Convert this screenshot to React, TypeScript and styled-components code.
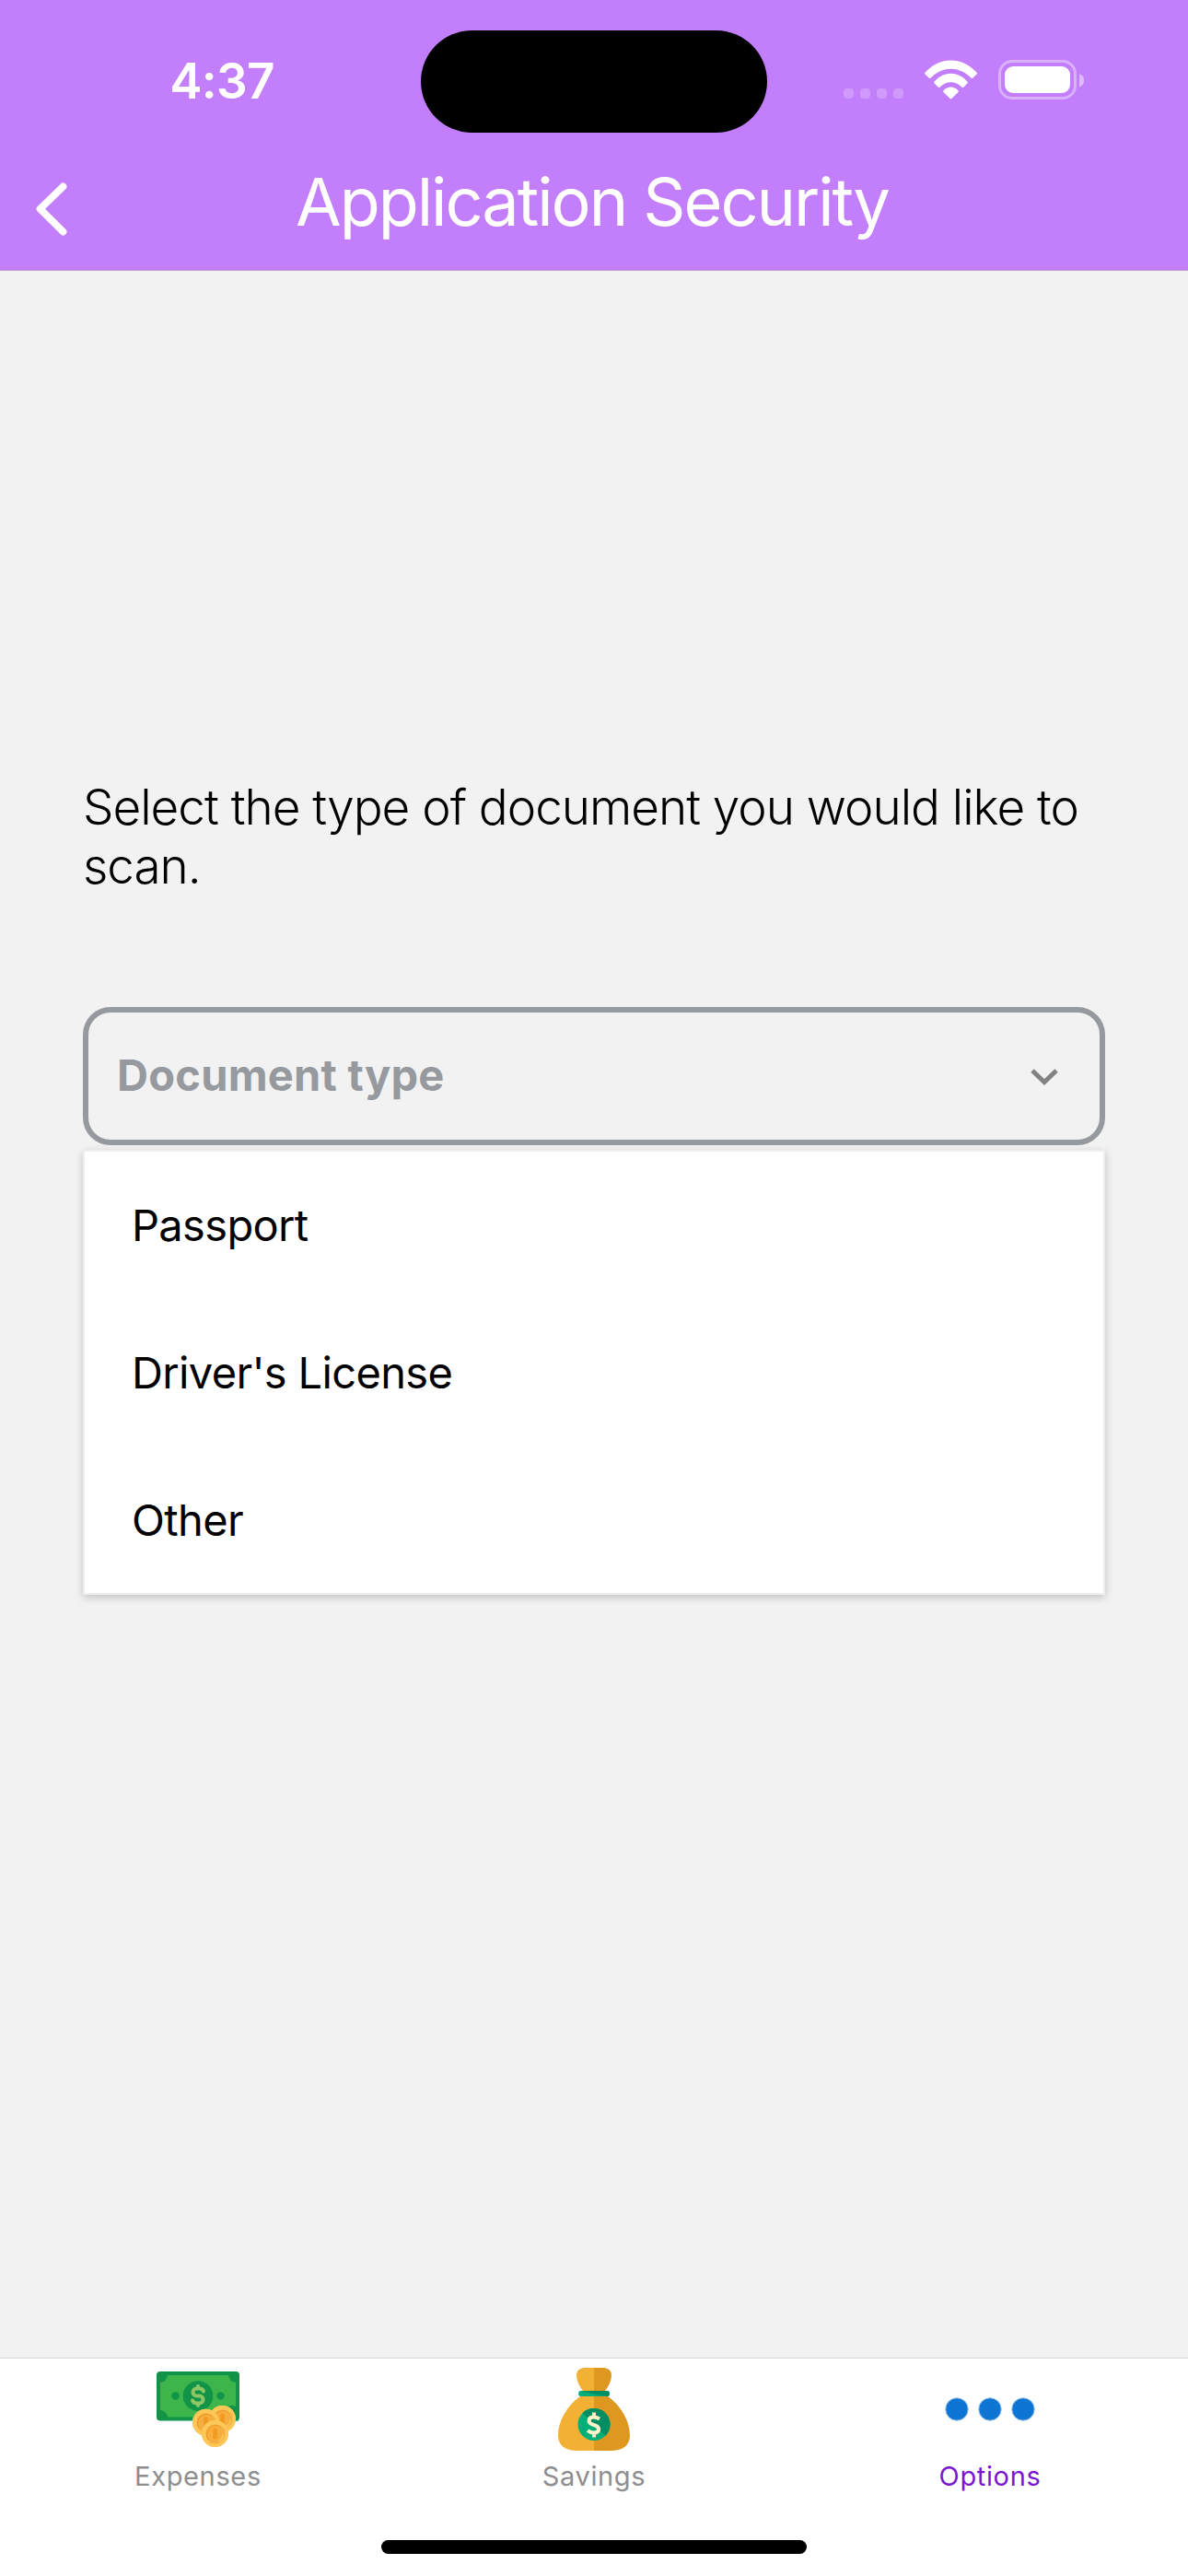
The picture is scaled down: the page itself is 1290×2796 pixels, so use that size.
import React from 'react';
import styled, { createGlobalStyle } from 'styled-components';

const GlobalStyle = createGlobalStyle`
  *, *::before, *::after { box-sizing: border-box; }
  html, body { margin: 0; padding: 0; }
  body { background: #f2f2f2; font-family: Inter, "Liberation Sans", sans-serif; }
  svg { display: block; flex: none; }
`;

const Screen = styled.div`
  width: 1290px;
  height: 2796px;
  display: flex;
  flex-direction: column;
  background: #f2f2f2;
  overflow: hidden;
`;

const Header = styled.header`
  height: 294px;
  flex: none;
  display: flex;
  flex-direction: column;
  background: #c27efb;
  border-bottom: 1px solid #b9a6c9;
  color: #fff;
`;

const StatusBar = styled.div`
  height: 177px;
  flex: none;
  display: grid;
  grid-template-columns: 457px 376px 457px;
  align-items: center;
`;

const Clock = styled.time`
  padding: 0 0 2px 25px;
  text-align: center;
  font-size: 53px;
  line-height: 64px;
  font-weight: 600;
  letter-spacing: -0.7px;
`;

const Island = styled.div`
  height: 111px;
  border-radius: 56px;
  background: #000;
`;

const StatusIcons = styled.div`
  padding-left: 83px;
  display: flex;
`;

const NavBar = styled.div`
  flex: 1;
  display: grid;
  grid-template-columns: 120px 1fr 120px;
  align-items: start;
`;

const BackButton = styled.button`
  margin: 0;
  padding: 16px 0 0 35px;
  border: 0;
  background: none;
  color: #fff;
`;

const Title = styled.h1`
  margin: 0;
  padding-right: 4px;
  text-align: center;
  font-size: 72px;
  line-height: 84px;
  font-weight: 400;
  letter-spacing: -2.05px;
  white-space: nowrap;
`;

const Content = styled.main`
  flex: 1;
  display: flex;
  flex-direction: column;
  padding: 550px 90px 0;
`;

const Prompt = styled.p`
  margin: 0 0 121px;
  font-size: 53px;
  line-height: 64px;
  font-weight: 300;
  letter-spacing: -1px;
  color: #000;
`;

const Select = styled.div`
  height: 150px;
  flex: none;
  display: flex;
  align-items: center;
  justify-content: space-between;
  padding: 0 44px 0 31px;
  border: 6px solid #96999e;
  border-radius: 30px;
`;

const Placeholder = styled.span`
  padding-bottom: 2px;
  font-size: 47px;
  line-height: 58px;
  font-weight: 700;
  letter-spacing: 0.25px;
  color: #96999e;
`;

const Menu = styled.ul`
  list-style: none;
  margin: 5px 0 0;
  padding: 0;
  border: 2px solid #eee;
  background: #fff;
  box-shadow: 0 3px 9px rgba(0, 0, 0, 0.2);
`;

const MenuItem = styled.li`
  height: 160px;
  display: flex;
  align-items: center;
  padding-left: 51px;
  font-size: 47px;
  line-height: 58px;
  letter-spacing: -0.65px;
  color: #000;

  &:last-child { height: 159px; }
`;

const TabBar = styled.nav`
  height: 237px;
  flex: none;
  display: flex;
  flex-direction: column;
  align-items: center;
  border-top: 1px solid #d8d8d8;
  background: #fff;
`;

const Tabs = styled.div`
  width: 100%;
  height: 197px;
  display: grid;
  grid-template-columns: repeat(3, 1fr);
  padding-top: 10px;
`;

const Tab = styled.a`
  display: flex;
  flex-direction: column;
  align-items: center;
  gap: 10px;
`;

const TabLabel = styled.span<{ $active?: boolean }>`
  font-size: 29px;
  line-height: 36px;
  letter-spacing: 0.65px;
  color: ${(p) => (p.$active ? '#7a16cf' : '#8e8e8f')};
`;

const HomeIndicator = styled.div`
  width: 462px;
  height: 15px;
  border-radius: 8px;
  background: #000;
`;

const StatusGlyphs = () => (
  <svg width="266" height="50" viewBox="0 0 266 50">
    <g fill="#fff" fillOpacity=".22">
      <rect x="0" y="32" width="11" height="11" rx="4" />
      <rect x="18" y="32" width="11" height="11" rx="4" />
      <rect x="36" y="32" width="11" height="11" rx="4" />
      <rect x="54" y="32" width="11" height="11" rx="4" />
    </g>
    <g fill="#fff">
      <path d="M88.700 14.600C104.500-2.800 128.300-2.800 144.300 14.600Q145.600 15.600 144.300 16.800L140.500 20.600Q139.500 21.600 138.400 20.500C125.700 7.400 107.300 7.400 94.700 20.500Q93.600 21.600 92.600 20.600L88.700 16.800Q87.400 15.600 88.700 14.600Z" />
      <path d="M98.700 24.400C109 13 124 13 134.300 24.400Q135.400 25.400 134.300 26.500L130.500 30.400Q129.500 31.400 128.400 30.400C121.200 23.400 111.800 23.400 104.600 30.400Q103.500 31.400 102.500 30.400L98.700 26.500Q97.600 25.400 98.700 24.400Z" />
      <path d="M108.700 34.100C113 29.200 120 29.200 124.300 34.100Q125.500 35.200 124.300 36.300L117.600 42.700Q116.500 43.700 115.400 42.700L108.700 36.300Q107.500 35.200 108.700 34.100Z" />
      <rect x="175" y="8" width="71" height="29" rx="9" />
    </g>
    <rect x="169.500" y="2.500" width="82" height="40" rx="13.500" fill="none" stroke="#fff" strokeOpacity=".4" strokeWidth="3" />
    <path d="M256 16.500Q261 17.500 261 23.500Q261 28.500 256 30.500Z" fill="#fff" fillOpacity=".48" />
  </svg>
);

const BackIcon = () => (
  <svg width="42" height="66" viewBox="0 0 42 66">
    <path d="M33.500 9.500L8.500 33.800L33.500 58.500" fill="none" stroke="#fff" strokeWidth="7.800" strokeLinecap="round" strokeLinejoin="round" />
  </svg>
);

const CaretIcon = () => (
  <svg width="32" height="20" viewBox="0 0 32 20">
    <path d="M3 4L16 16.500L29 4" fill="none" stroke="#828282" strokeWidth="5" />
  </svg>
);

const Coin = ({ x, y }: { x: number; y: number }) => (
  <g transform={`translate(${x} ${y})`}>
    <circle r="14.500" fill="#f9b341" />
    <path d="M-14.500 0A14.500 14.500 0 0 1 11-9.500L-9 11A14.500 14.500 0 0 1-14.500 0Z" fill="#fdcd60" />
    <circle r="12.800" fill="none" stroke="#fdc857" strokeWidth="3.200" />
    <circle r="10.200" fill="#f7ae40" />
    <path d="M-7 7A10 10 0 0 1 7-7" fill="none" stroke="#f19b25" strokeWidth="1.200" />
    <rect x="-2.300" y="-6" width="4.600" height="12" rx="2" fill="#f29a1f" />
    <path d="M4 8.500Q8 6 8.500 1" fill="none" stroke="#fcc65b" strokeWidth="1.800" />
  </g>
);

const ExpensesIcon = () => (
  <svg width="90" height="90" viewBox="0 0 90 90">
    <rect x="0" y="4" width="90" height="53.500" rx="4" fill="#119447" />
    <path d="M12 8H78Q79 15 86 16V46Q79 47 78 53.500H12Q11 47 4 46V16Q11 15 12 8Z" fill="#3db54a" />
    <circle cx="45" cy="30.500" r="16.300" fill="#119447" />
    <circle cx="20.500" cy="30.500" r="4.200" fill="#119447" />
    <circle cx="69.500" cy="30.500" r="4.200" fill="#119447" />
    <path d="M45 20V22M45 39V41M51 25.500Q50 22.500 46 22.500H43.500A4 4 0 0 0 43.500 30.500H46.500A4 4 0 0 1 46.500 38.500H44Q40 38.500 39 35.500" fill="none" stroke="#8cc665" strokeWidth="4" strokeLinecap="round" />
    <path d="M78 42Q86 38 89 48V57.500H78Z" fill="#119447" />
    <Coin x={71.500} y={55.500} />
    <Coin x={53.500} y={59.300} />
    <Coin x={63.500} y={71.500} />
  </svg>
);

const SavingsIcon = () => (
  <svg width="90" height="90" viewBox="0 0 90 90">
    <path d="M45 0H34Q26 1 26 8Q26 16 33 25H45ZM45 31H30C15 42 6 58 6 74Q7 90 27 90H45Z" fill="#f2b134" />
    <path d="M45 0H56Q64 1 64 8Q64 16 57 25H45ZM45 31H60C75 42 84 58 84 74Q83 90 63 90H45Z" fill="#de981f" />
    <rect x="28.200" y="25" width="33.600" height="6" rx="2.500" fill="#00ae78" />
    <path d="M30.500 25H59.300Q61.800 25 61.800 28Q61.800 31 59.300 31Q45 29 30.500 25Z" fill="#008d62" />
    <circle cx="45" cy="61.500" r="17.500" fill="#00ae78" />
    <path d="M32.600 49.100A17.500 17.500 0 0 1 57.400 73.900Z" fill="#008d62" />
    <path d="M45 48.500V53M45 70.500V75.500M51 55.500Q47.500 53.500 44.500 53.500C38.500 53.500 38 59.500 43 61.300L46.500 62.600C52 64.800 51 70.500 45 70.500Q41 70.500 38 68.200" fill="none" stroke="#fff4c9" strokeWidth="4" />
  </svg>
);

const OptionsIcon = () => (
  <svg width="100" height="90" viewBox="0 0 100 90">
    <g fill="#0e75d2" stroke="#8fc0ea" strokeWidth="1">
      <circle cx="14" cy="45" r="12.200" />
      <circle cx="50" cy="45" r="12.200" />
      <circle cx="86" cy="45" r="12.200" />
    </g>
  </svg>
);

const tabs = [
  { label: 'Expenses', Icon: ExpensesIcon },
  { label: 'Savings', Icon: SavingsIcon },
  { label: 'Options', Icon: OptionsIcon, active: true },
];

const documentTypes = ['Passport', "Driver's License", 'Other'];

export default function App() {
  return (
    <>
      <GlobalStyle />
      <Screen>
        <Header>
          <StatusBar>
            <Clock>4:37</Clock>
            <Island />
            <StatusIcons><StatusGlyphs /></StatusIcons>
          </StatusBar>
          <NavBar>
            <BackButton aria-label="Back"><BackIcon /></BackButton>
            <Title>Application Security</Title>
          </NavBar>
        </Header>
        <Content>
          <Prompt>Select the type of document you would like to scan.</Prompt>
          <Select>
            <Placeholder>Document type</Placeholder>
            <CaretIcon />
          </Select>
          <Menu>
            {documentTypes.map((type) => <MenuItem key={type}>{type}</MenuItem>)}
          </Menu>
        </Content>
        <TabBar>
          <Tabs>
            {tabs.map(({ label, Icon, active }) => (
              <Tab key={label}>
                <Icon />
                <TabLabel $active={active}>{label}</TabLabel>
              </Tab>
            ))}
          </Tabs>
          <HomeIndicator />
        </TabBar>
      </Screen>
    </>
  );
}
